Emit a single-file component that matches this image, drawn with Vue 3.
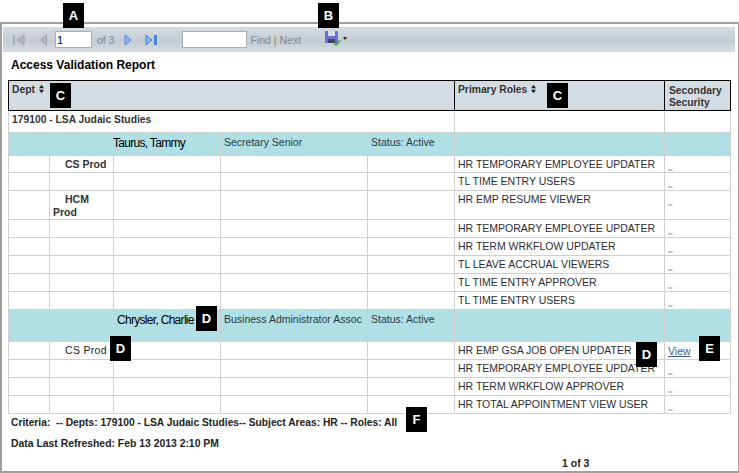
<script setup>
const stub = '_'

const rows = [
  { type: 'dept', text: '179100 - LSA Judaic Studies' },
  { type: 'person', name: 'Taurus, Tammy', nameClass: 'name-tammy', title: 'Secretary Senior', status: 'Status: Active', cls: 'h23' },
  { type: 'role', sys: 'CS Prod', role: 'HR TEMPORARY EMPLOYEE UPDATER', cls: 'h17' },
  { type: 'role', sys: '', role: 'TL TIME ENTRY USERS', cls: 'h18' },
  { type: 'role', sys: 'HCM Prod', role: 'HR EMP RESUME VIEWER', cls: 'h29' },
  { type: 'role', sys: '', role: 'HR TEMPORARY EMPLOYEE UPDATER', cls: 'h18' },
  { type: 'role', sys: '', role: 'HR TERM WRKFLOW UPDATER', cls: 'h18' },
  { type: 'role', sys: '', role: 'TL LEAVE ACCRUAL VIEWERS', cls: 'h18' },
  { type: 'role', sys: '', role: 'TL TIME ENTRY APPROVER', cls: 'h18' },
  { type: 'role', sys: '', role: 'TL TIME ENTRY USERS', cls: 'h18' },
  { type: 'person', name: 'Chrysler, Charlie', nameClass: 'name-charlie', title: 'Business Administrator Assoc', status: 'Status: Active', cls: 'h32' },
  { type: 'role', sys: 'CS Prod', sysPlain: true, role: 'HR EMP GSA JOB OPEN UPDATER', view: true, cls: 'h18' },
  { type: 'role', sys: '', role: 'HR TEMPORARY EMPLOYEE UPDATER', cls: 'h18' },
  { type: 'role', sys: '', role: 'HR TERM WRKFLOW APPROVER', cls: 'h18' },
  { type: 'role', sys: '', role: 'HR TOTAL APPOINTMENT VIEW USER', cls: 'h18' }
]

const badges = [
  { label: 'A', x: 63, y: 3 },
  { label: 'B', x: 318, y: 3 },
  { label: 'C', x: 50, y: 83 },
  { label: 'C', x: 547, y: 83 },
  { label: 'D', x: 196, y: 306 },
  { label: 'D', x: 110, y: 336 },
  { label: 'D', x: 636, y: 342 },
  { label: 'E', x: 699, y: 336 },
  { label: 'F', x: 406, y: 407 }
]
</script>

<template>
  <div class="page">
    <div class="frame">
      <div class="toolbar">
        <svg class="ico first" width="14" height="12" viewBox="0 0 14 12">
          <path d="M1 1h2v10H1z" fill="#a9afb5" />
          <path d="M12 1v10L5 6z" fill="#b4bac0" stroke="#9aa0a6" />
        </svg>
        <svg class="ico prev" width="9" height="12" viewBox="0 0 9 12">
          <path d="M7.5 1v10L1.5 6z" fill="#b4bac0" stroke="#9aa0a6" />
        </svg>
        <input class="page-input" value="1" />
        <span class="tool-text of">of 3</span>
        <svg class="ico next" width="8" height="12" viewBox="0 0 8 12">
          <path d="M1 1v10l6-5z" fill="#8db4ea" stroke="#4a86d8" />
        </svg>
        <svg class="ico last" width="13" height="12" viewBox="0 0 13 12">
          <path d="M1 1v10l6-5z" fill="#8db4ea" stroke="#4a86d8" />
          <path d="M9 1h3v10H9z" fill="#4a86d8" />
        </svg>
        <input class="find-input" />
        <span class="tool-text find">Find | Next</span>
        <svg class="ico save" width="16" height="15" viewBox="0 0 16 15">
          <path d="M0 0h12l1 1v11H0z" fill="#6a6fd0" />
          <path d="M3 0h7v5H3z" fill="#d8dcf4" />
          <path d="M3 8h7v4H3z" fill="#3d4270" />
          <path d="M7 11l2 2 2-1 4-3 1 1-5 5-3-2z" fill="#45a94a" />
        </svg>
        <span class="caret"></span>
      </div>

      <h1 class="title">Access Validation Report</h1>

      <table class="report">
        <colgroup>
          <col class="c1" /><col class="c2" /><col class="c3" /><col class="c4" /><col class="c5" /><col class="c6" /><col class="c7" />
        </colgroup>
        <thead>
          <tr>
            <th colspan="5">Dept
              <svg class="sort" width="5" height="10" viewBox="0 0 6 10">
                <path d="M3 0l3 4H0zM0 6h6l-3 4z" fill="#222" />
              </svg>
            </th>
            <th>Primary Roles
              <svg class="sort" width="5" height="10" viewBox="0 0 6 10">
                <path d="M3 0l3 4H0zM0 6h6l-3 4z" fill="#222" />
              </svg>
            </th>
            <th>Secondary<br />Security</th>
          </tr>
        </thead>
        <tbody>
          <template v-for="(row, i) in rows" :key="i">
            <tr v-if="row.type === 'dept'" class="h22">
              <td colspan="5" class="dept">{{ row.text }}</td>
              <td></td>
              <td></td>
            </tr>
            <tr v-else-if="row.type === 'person'" class="person" :class="row.cls">
              <td></td>
              <td colspan="2" class="name" :class="row.nameClass">{{ row.name }}</td>
              <td>{{ row.title }}</td>
              <td>{{ row.status }}</td>
              <td></td>
              <td></td>
            </tr>
            <tr v-else :class="row.cls">
              <td></td>
              <td class="sys" :class="{ plain: row.sysPlain }">{{ row.sys }}</td>
              <td></td>
              <td></td>
              <td></td>
              <td class="role">{{ row.role }}</td>
              <td class="sec">
                <a v-if="row.view" class="view">View</a>
                <a v-else class="stub">{{ stub }}</a>
              </td>
            </tr>
          </template>
        </tbody>
      </table>

      <p class="criteria">Criteria: &nbsp;-- Depts: 179100 - LSA Judaic Studies-- Subject Areas: HR -- Roles: All</p>
      <p class="refreshed">Data Last Refreshed: Feb 13 2013 2:10 PM</p>
      <p class="pager">1 of 3</p>
    </div>

    <span
      v-for="(b, i) in badges"
      :key="i"
      class="badge"
      :style="{ left: b.x + 'px', top: b.y + 'px' }"
    >{{ b.label }}</span>
  </div>
</template>

<style>
html,
body {
  margin: 0;
  background: #fff;
}
</style>

<style scoped>
.page {
  position: relative;
  width: 739px;
  height: 473px;
  padding-top: 22px;
  box-sizing: border-box;
  overflow: hidden;
  font-family: "Liberation Sans", Arial, sans-serif;
  color: #1a1a1a;
}

.frame {
  width: 739px;
  height: 451px;
  box-sizing: border-box;
  border: 2px solid #a0a0a0;
  border-right-width: 1px;
  padding: 3px 3px 0 1px;
}

.toolbar {
  display: flex;
  align-items: center;
  height: 25px;
  background: linear-gradient(#d6dce4, #c4cbd2 55%, #d6dce2);
}

.ico {
  flex: none;
}
.first { margin-left: 9px; }
.prev { margin-left: 13px; }
.next { margin-left: 9px; }
.last { margin-left: 13px; }
.save { margin: -2px 0 0 24px; }

.page-input,
.find-input {
  box-sizing: border-box;
  height: 17px;
  padding: 0 1px;
  background: #fff;
  border: 1px solid #a8aeb4;
  font: 11px "Liberation Sans", Arial, sans-serif;
  color: #000;
  outline: none;
}
.page-input {
  width: 37px;
  margin-left: 7px;
}
.find-input {
  width: 65px;
  margin-left: 24px;
}

.tool-text {
  font-size: 10.5px;
  color: #80868c;
}
.of { margin-left: 5px; }
.find { margin-left: 4px; }

.caret {
  width: 0;
  height: 0;
  margin: -2px 0 0 2px;
  border: 2.5px solid transparent;
  border-top: 3px solid #222;
  border-bottom: 0;
}

.title {
  margin: 5px 0 0 8px;
  height: 23px;
  font-size: 12px;
  line-height: 16px;
  font-weight: bold;
  color: #000;
}

.report {
  width: 722px;
  margin-left: 5px;
  table-layout: fixed;
  border-collapse: collapse;
  font-size: 10.5px;
}
.c1 { width: 41px; }
.c2 { width: 64px; }
.c3 { width: 107px; }
.c4 { width: 147px; }
.c5 { width: 87px; }
.c6 { width: 210px; }
.c7 { width: 66px; }

.report th {
  height: 30px;
  padding: 3px 3px 0;
  box-sizing: border-box;
  vertical-align: top;
  text-align: left;
  background: #d3dce3;
  border: 1px solid #000;
  font-size: 10.3px;
  line-height: 12px;
  font-weight: bold;
  color: #333;
}
.report th:last-child {
  padding: 4px 0 0 4px;
}

.sort {
  margin-left: 1px;
  vertical-align: -1px;
}

.report td {
  box-sizing: border-box;
  padding: 0 3px 0 3px;
  vertical-align: top;
  border: 1px solid #d0d0d0;
  line-height: 13px;
  overflow: visible;
  white-space: nowrap;
}

.h17 { height: 17px; }
.h18 { height: 18px; }
.h22 { height: 22px; }
.h23 { height: 23px; }
.h29 { height: 29px; }
.h32 { height: 32px; }

.report td.dept {
  padding-top: 2px;
  font-size: 10.3px;
  font-weight: bold;
  color: #333;
}

.person td {
  padding-top: 3px;
  background: #b0dfe5;
  font-size: 10.5px;
  color: #2a3a3e;
}
.report .person td.name {
  font-size: 12px;
  letter-spacing: -0.7px;
  line-height: 15px;
  color: #000;
}
.report td.name-tammy { padding-left: 63px; }
.report td.name-charlie { padding-left: 67px; }

.report td.sys {
  padding: 2px 2px 0 3px;
  text-indent: 12px;
  white-space: normal;
  font-weight: bold;
  color: #333;
}
.report td.sys.plain {
  font-weight: normal;
  letter-spacing: 0.3px;
  color: #222;
}

.report td.role {
  padding-top: 2px;
  color: #2d2d33;
}

.view {
  display: block;
  padding-top: 2px;
  line-height: 14px;
  font-size: 10.5px;
  color: #3a5a8c;
  text-decoration: underline;
}
.stub {
  display: block;
  padding-top: 6px;
  line-height: 10px;
  font-size: 8px;
  font-weight: bold;
  color: #0f4a6a;
  text-shadow: 0 0.5px 0 #0f4a6a;
}

.criteria,
.refreshed {
  margin: 0 0 0 8px;
  font-size: 10.5px;
  font-weight: bold;
  color: #222;
}
.criteria {
  margin-top: 2px;
  font-size: 10.25px;
  line-height: 13px;
}
.refreshed {
  margin-top: 8px;
  font-size: 10.4px;
  line-height: 13px;
}

.pager {
  margin: 7px 0 0 559px;
  font-size: 10.5px;
  line-height: 13px;
  font-weight: bold;
  color: #222;
}

.badge {
  position: absolute;
  width: 21px;
  height: 25px;
  display: flex;
  align-items: center;
  justify-content: center;
  background: #000;
  color: #fff;
  font-size: 13px;
  font-weight: bold;
}
</style>
